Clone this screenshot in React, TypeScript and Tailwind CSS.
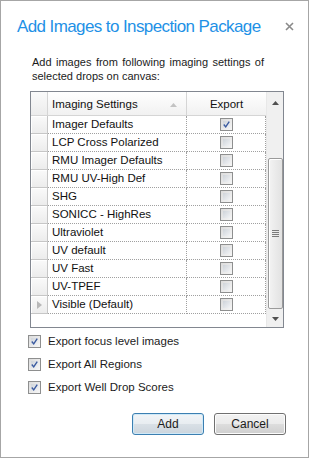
import React from "react";

const rows = [
  { name: "Imager Defaults", checked: true },
  { name: "LCP Cross Polarized" },
  { name: "RMU Imager Defaults" },
  { name: "RMU UV-High Def" },
  { name: "SHG" },
  { name: "SONICC - HighRes" },
  { name: "Ultraviolet" },
  { name: "UV default" },
  { name: "UV Fast" },
  { name: "UV-TPEF" },
  { name: "Visible (Default)", current: true },
];

function Check({ checked }: { checked?: boolean }) {
  return (
    <div className="w-[13px] h-[13px] border border-[#8e8f8f] bg-[linear-gradient(135deg,#dcdcdc,#f6f6f6)] p-[2px] flex items-center justify-center">
      <div className="w-full h-full bg-[linear-gradient(135deg,#cfd4da,#f2f3f5)] flex items-center justify-center">
        {checked && (
          <svg width="9" height="9" viewBox="0 0 9 9">
            <path d="M1 4.5 L3.5 7.5 L8 0.8" fill="none" stroke="#3b5ba0" strokeWidth="1.8" />
          </svg>
        )}
      </div>
    </div>
  );
}

function RowHeader({ current }: { current?: boolean }) {
  return (
    <div className="w-[17px] h-[18px] border-r border-b border-[#c6c6c6] bg-[linear-gradient(180deg,#fafafa,#ececec)] shadow-[inset_1px_1px_0_#ffffff] flex items-center justify-center">
      {current && (
        <svg width="5" height="8" viewBox="0 0 5 8">
          <path d="M0 0 L5 4 L0 8 Z" fill="#b8b8b8" />
        </svg>
      )}
    </div>
  );
}

export default function App() {
  const font = { fontFamily: '"Liberation Sans", Arial, sans-serif' } as React.CSSProperties;
  return (
    <div className="w-[312px] h-[458px] bg-white" style={font}>
      <div className="w-[309px] h-[458px] border border-[#a6a6a6] bg-white flex flex-col">
        {/* Title */}
        <div className="flex items-start justify-between pl-[16px] pr-[14px] pt-[14px] h-[48px]">
          <div className="text-[#1e91e6] text-[17px] leading-[24px] whitespace-nowrap tracking-[-0.6px]">
            Add Images to Inspection Package
          </div>
          <svg width="9" height="9" viewBox="0 0 9 9" className="mt-[7px]">
            <path d="M1 1 L8 8 M8 1 L1 8" stroke="#8a8a8a" strokeWidth="1.6" />
          </svg>
        </div>

        {/* Description */}
        <div className="ml-[31px] w-[232px] text-[11px] leading-[14px] text-[#1b1b1b] text-justify mt-[6px]">
          Add images from following imaging settings of selected drops on canvas:
        </div>

        {/* Grid */}
        <div className="ml-[29px] mt-[8px] w-[254px] h-[237px] border border-[#828790] flex text-[11.5px] text-[#111]">
          <div className="flex-1 flex flex-col">
            {/* header */}
            <div className="flex h-[24px] bg-[linear-gradient(180deg,#ffffff,#f1f1f1)] border-b border-[#d5d5d5]">
              <div className="w-[17px] border-r border-[#d5d5d5] bg-[linear-gradient(180deg,#fafafa,#ececec)]" />
              <div className="w-[139px] border-r border-[#d5d5d5] flex items-center justify-between pl-[4px] pr-[9px] pt-[2px]">
                <span>Imaging Settings</span>
                <svg width="7" height="4" viewBox="0 0 7 4">
                  <path d="M0 4 L3.5 0 L7 4 Z" fill="#c3c3c3" />
                </svg>
              </div>
              <div className="flex-1 flex items-center justify-center pt-[2px]">Export</div>
            </div>
            {rows.map((r) => (
              <div key={r.name} className="flex h-[18px]">
                <RowHeader current={r.current} />
                <div className="w-[139px] h-[18px] border-r border-b border-dotted border-[#a0a0a0] flex items-center pl-[4px]">
                  {r.name}
                </div>
                <div className="flex-1 h-[18px] border-r border-b border-dotted border-[#a0a0a0] flex items-center justify-center">
                  <Check checked={r.checked} />
                </div>
              </div>
            ))}
          </div>
          {/* scrollbar */}
          <div className="w-[17px] bg-[#f0f0f0] border-l border-[#e8e8e8] flex flex-col items-center">
            <div className="h-[17px] w-full flex items-center justify-center mt-[2px]">
              <svg width="7" height="4" viewBox="0 0 7 4">
                <path d="M0 4 L3.5 0 L7 4 Z" fill="#505050" />
              </svg>
            </div>
            <div className="mt-[47px] w-[15px] h-[151px] rounded-[2px] border border-[#9a9a9a] bg-[linear-gradient(90deg,#f3f3f3,#e2e2e2)] shadow-[inset_1px_1px_0_#ffffff] flex flex-col items-center justify-center gap-[1px]">
              <div className="w-[7px] h-[1px] bg-[#7a7a7a]" />
              <div className="w-[7px] h-[1px] bg-[#7a7a7a]" />
              <div className="w-[7px] h-[1px] bg-[#7a7a7a]" />
              <div className="w-[7px] h-[1px] bg-[#7a7a7a]" />
            </div>
            <div className="flex-1" />
            <div className="h-[17px] w-full flex items-center justify-center">
              <svg width="7" height="4" viewBox="0 0 7 4">
                <path d="M0 0 L3.5 4 L7 0 Z" fill="#505050" />
              </svg>
            </div>
          </div>
        </div>

        {/* Options */}
        <div className="ml-[27px] mt-[7px] flex flex-col gap-[10px] text-[11.5px] text-[#1b1b1b]">
          {["Export focus level images", "Export All Regions", "Export Well Drop Scores"].map((t) => (
            <div key={t} className="flex items-center gap-[7px] h-[13px]">
              <Check checked />
              <span>{t}</span>
            </div>
          ))}
        </div>

        {/* Buttons */}
        <div className="flex justify-end gap-[10px] mr-[22px] mt-[19px] text-[12px] text-[#1b1b1b]">
          <button className="w-[72px] h-[22px] rounded-[3px] border border-[#3c7fb1] bg-[linear-gradient(180deg,#f1f4f7_0%,#e8edf1_50%,#d9e0e6_51%,#ccd5dd_100%)] shadow-[inset_0_0_0_1px_#cfe9f8]">
            Add
          </button>
          <button className="w-[72px] h-[22px] rounded-[3px] border border-[#707070] bg-[linear-gradient(180deg,#f2f2f2_0%,#ebebeb_50%,#dddddd_51%,#cfcfcf_100%)] shadow-[inset_0_0_0_1px_#fcfcfc]">
            Cancel
          </button>
        </div>
      </div>
    </div>
  );
}
